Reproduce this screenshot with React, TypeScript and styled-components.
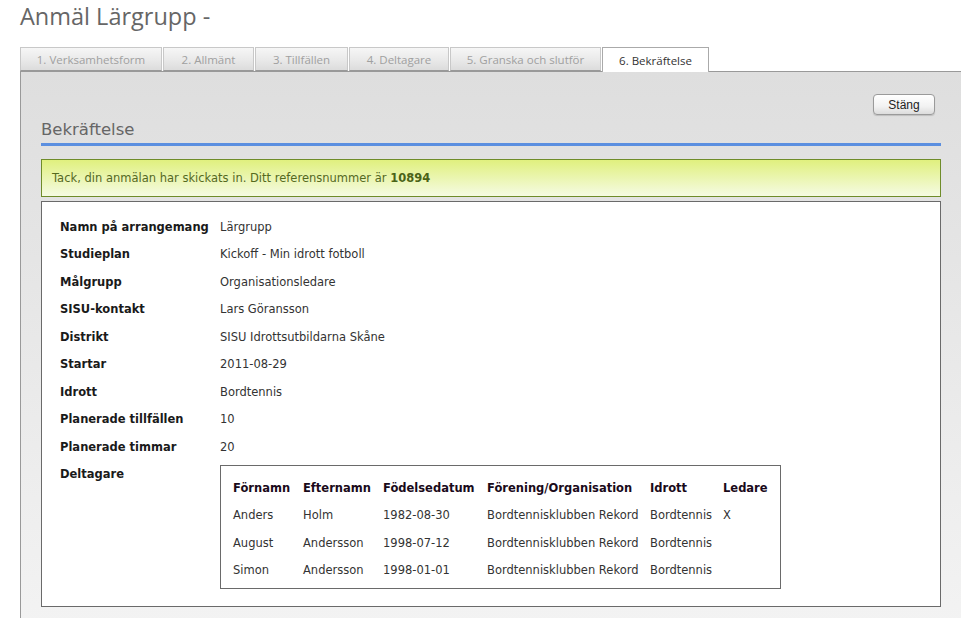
import React from "react";
import styled, { createGlobalStyle } from "styled-components";

const Global = createGlobalStyle`
  html, body { margin: 0; padding: 0; background: #fff; }
  body { font-family: "DejaVu Sans", Verdana, sans-serif; overflow: hidden; }
`;

const Page = styled.div`
  width: 961px;
  height: 618px;
  padding-left: 20px;
  box-sizing: border-box;
  overflow: hidden;
`;

const Title = styled.h1`
  margin: 0;
  height: 47px;
  font-family: "Open Sans", "Noto Sans", sans-serif;
  font-weight: 400;
  font-size: 23.5px;
  line-height: 32px;
  color: #666;
`;

const TabBar = styled.div`
  display: flex;
  gap: 1px;
  height: 24px;
  position: relative;
  z-index: 1;
`;

const Tab = styled.div<{ $w: number; $active?: boolean }>`
  width: ${(p) => p.$w}px;
  box-sizing: border-box;
  height: ${(p) => (p.$active ? 25 : 24)}px;
  display: flex;
  align-items: center;
  justify-content: center;
  font-family: "Open Sans", "Noto Sans", sans-serif;
  font-size: 11.5px;
  color: ${(p) => (p.$active ? "#333" : "#a0a0a0")};
  border: 1px solid ${(p) => (p.$active ? "#aaa" : "#c8c8c8")};
  border-bottom: ${(p) => (p.$active ? "none" : "1px solid #999")};
  background: ${(p) =>
    p.$active ? "#fff" : "linear-gradient(#f6f6f6, #e9e9e9 55%, #dcdcdc)"};
`;

const Panel = styled.div`
  border-top: 1px solid #999;
  border-left: 1px solid #999;
  height: 560px;
  padding: 0 20px 0 20px;
  background: linear-gradient(#dedede, #f3f3f3 560px);
`;

const ButtonRow = styled.div`
  display: flex;
  justify-content: flex-end;
  padding: 22px 6px 0 0;
  height: 21px;
`;

const CloseButton = styled.button`
  width: 62px;
  height: 21px;
  box-sizing: border-box;
  border: 1px solid #9a9a9a;
  border-radius: 4px;
  background: linear-gradient(#ffffff, #f2f2f2 60%, #dcdcdc);
  font-family: "Liberation Sans", Arial, sans-serif;
  font-size: 12px;
  color: #222;
  padding: 0;
  box-shadow: 0 1px 1px rgba(0, 0, 0, 0.15);
`;

const Heading = styled.h2`
  margin: 0;
  padding-top: 5px;
  font-weight: 400;
  font-size: 16.5px;
  line-height: 20px;
  color: #666;
  height: 23px;
  border-bottom: 3px solid #5b8fe0;
`;

const Notice = styled.div`
  margin-top: 13px;
  height: 38px;
  box-sizing: border-box;
  border: 1px solid #6f8c2a;
  background: linear-gradient(#e0f07e, #f5fbe3);
  display: flex;
  align-items: center;
  padding-left: 10px;
  font-size: 11.5px;
  color: #55691f;
  b { font-weight: 700; color: #4a6317; }
`;

const Details = styled.div`
  margin-top: 4px;
  height: 406px;
  box-sizing: border-box;
  border: 1px solid #6a6a6a;
  background: #fff;
  padding: 12px 0 0 18px;
`;

const Row = styled.div`
  display: grid;
  grid-template-columns: 160px 1fr;
  align-items: start;
  font-size: 11.5px;
  line-height: 27.44px;
`;

const Label = styled.div`
  font-weight: 700;
  color: #1a1a1a;
`;

const Value = styled.div`
  color: #333;
`;

const Participants = styled.div`
  margin-top: 4px;
  width: 561px;
  box-sizing: border-box;
  border: 1px solid #6a6a6a;
  padding: 9px 0 4px 12px;
  display: grid;
  grid-template-columns: 70px 80px 104px 163px 73px auto;
  font-size: 11.5px;
  line-height: 27.3px;
`;

const Th = styled.div`
  font-weight: 700;
  color: #1a0a1a;
`;

const Td = styled.div`
  color: #333;
`;

const tabs = [
  { label: "1. Verksamhetsform", w: 142 },
  { label: "2. Allmänt", w: 91 },
  { label: "3. Tillfällen", w: 93 },
  { label: "4. Deltagare", w: 100 },
  { label: "5. Granska och slutför", w: 151 },
  { label: "6. Bekräftelse", w: 107, active: true },
];

const details: [string, string][] = [
  ["Namn på arrangemang", "Lärgrupp"],
  ["Studieplan", "Kickoff - Min idrott fotboll"],
  ["Målgrupp", "Organisationsledare"],
  ["SISU-kontakt", "Lars Göransson"],
  ["Distrikt", "SISU Idrottsutbildarna Skåne"],
  ["Startar", "2011-08-29"],
  ["Idrott", "Bordtennis"],
  ["Planerade tillfällen", "10"],
  ["Planerade timmar", "20"],
];

const headers = ["Förnamn", "Efternamn", "Födelsedatum", "Förening/Organisation", "Idrott", "Ledare"];
const people = [
  ["Anders", "Holm", "1982-08-30", "Bordtennisklubben Rekord", "Bordtennis", "X"],
  ["August", "Andersson", "1998-07-12", "Bordtennisklubben Rekord", "Bordtennis", ""],
  ["Simon", "Andersson", "1998-01-01", "Bordtennisklubben Rekord", "Bordtennis", ""],
];

export default function App() {
  return (
    <>
      <Global />
      <Page>
        <Title>Anmäl Lärgrupp -</Title>
        <TabBar>
          {tabs.map((t) => (
            <Tab key={t.label} $w={t.w} $active={t.active}>
              {t.label}
            </Tab>
          ))}
        </TabBar>
        <Panel>
          <ButtonRow>
            <CloseButton>Stäng</CloseButton>
          </ButtonRow>
          <Heading>Bekräftelse</Heading>
          <Notice>
            <span>
              Tack, din anmälan har skickats in. Ditt referensnummer är <b>10894</b>
            </span>
          </Notice>
          <Details>
            {details.map(([l, v]) => (
              <Row key={l}>
                <Label>{l}</Label>
                <Value>{v}</Value>
              </Row>
            ))}
            <Row>
              <Label>Deltagare</Label>
              <Participants>
                {headers.map((h) => (
                  <Th key={h}>{h}</Th>
                ))}
                {people.map((p, i) =>
                  p.map((c, j) => <Td key={`${i}-${j}`}>{c}</Td>)
                )}
              </Participants>
            </Row>
          </Details>
        </Panel>
      </Page>
    </>
  );
}
